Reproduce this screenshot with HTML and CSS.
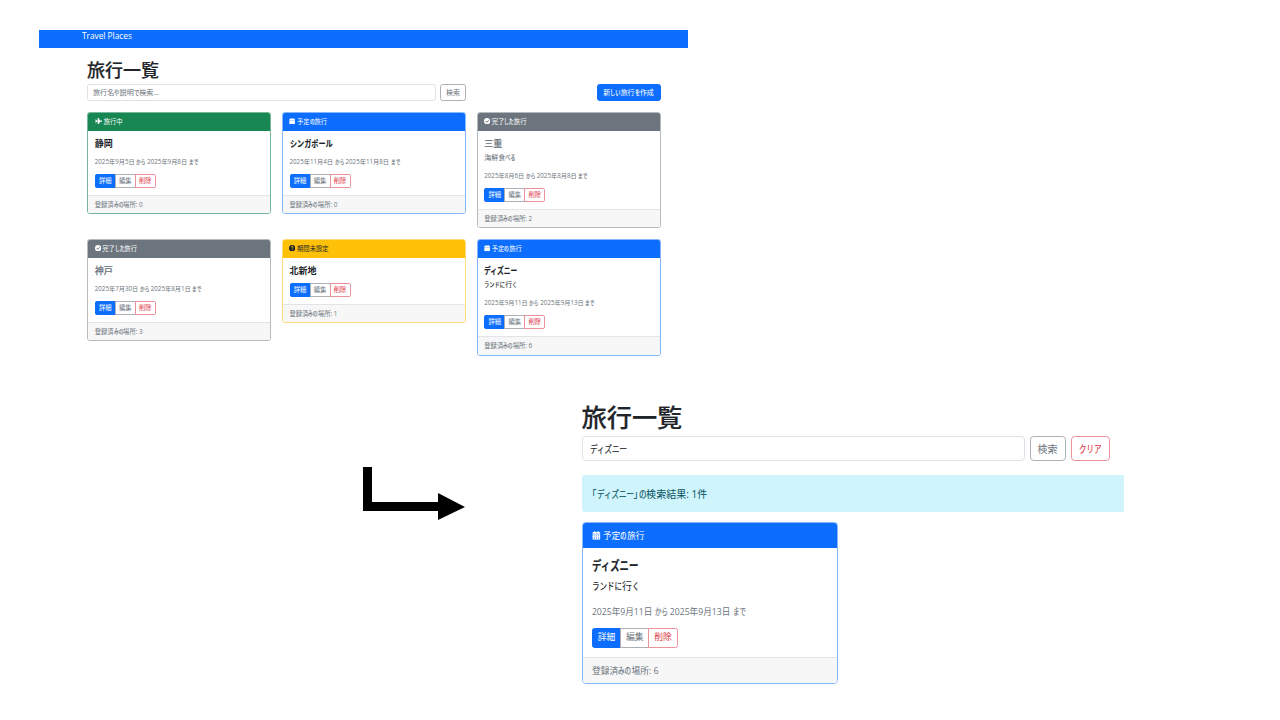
FILE: index.html
```html
<!DOCTYPE html>
<html lang="ja">
<head>
<meta charset="utf-8">
<title>Travel Places</title>
<link rel="stylesheet" href="styles.css">
</head>
<body>
<svg class="defs" aria-hidden="true">
  <symbol id="plane" viewBox="0 0 18 16"><path d="M15.6 6.2c1 0 2.2.9 2.2 1.8s-1.2 1.8-2.2 1.8h-3.5l-3.200 5.600c-.2.4-.5.6-.9.6H6.100c-.4 0-.6-.3-.5-.7L7.100 9.800H3.900L2.500 11.600c-.1.200-.3.300-.5.300H.600c-.300 0-.500-.3-.500-.600L1.100 8 .100 4.700c-.1-.300.1-.600.500-.600H2c.200 0 .4.100.5.300l1.400 1.800h3.200L5.600.700C5.500.3 5.700 0 6.100 0H8c.4 0 .7.200.900.600l3.200 5.600z"/></symbol>
  <symbol id="cal" viewBox="0 0 14 16"><path d="M4.500 0c.6 0 1 .4 1 1v1h3V1c0-.6.4-1 1-1s1 .4 1 1v1h2C13.300 2 14 2.700 14 3.500V5H0V3.500C0 2.700.7 2 1.500 2h2V1c0-.6.4-1 1-1zM0 5.500h14v9c0 .8-.7 1.500-1.500 1.500h-11C.7 16 0 15.300 0 14.500z"/></symbol>
  <symbol id="caldays" viewBox="0 0 14 16"><path fill-rule="evenodd" d="M4 0c.6 0 1 .4 1 1v1h4V1c0-.6.4-1 1-1s1 .4 1 1v1h1.500c.8 0 1.500.7 1.500 1.500V5H0V3.500C0 2.700.7 2 1.500 2H3V1c0-.6.4-1 1-1zM0 6h14v8.500c0 .8-.7 1.500-1.500 1.500h-11C.7 16 0 15.300 0 14.500zM2 8v1.600h2V8zm4 0v1.600h2V8zm4 0v1.600h2V8zM2 12v1.600h2V12zm4 0v1.600h2V12zm4 0v1.600h2V12z"/></symbol>
  <symbol id="check" viewBox="0 0 16 16"><path fill-rule="evenodd" d="M8 0a8 8 0 1 1 0 16A8 8 0 0 1 8 0zM11.500 5 7 9.400 4.700 7.200 3.500 8.500 7 12l5.800-5.700z"/></symbol>
  <symbol id="question" viewBox="0 0 16 16"><path fill-rule="evenodd" d="M8 0a8 8 0 1 1 0 16A8 8 0 0 1 8 0zM4.800 6h1.700c0-.8.6-1.300 1.500-1.300s1.400.4 1.400 1c0 1.300-2.200 1.200-2.200 3.500h1.600c0-1.500 2.300-1.600 2.300-3.600C11.100 4 9.800 3.100 8 3.100 6.100 3.100 4.800 4.200 4.800 6zM7 10.500v2h2v-2z"/></symbol>
</svg>

<section class="screen overview">
  <nav class="navbar">Travel Places</nav>
  <div class="container">
    <h1>旅行一覧</h1>
    <div class="toolbar">
      <div class="field placeholder">旅行名や説明で検索...</div>
      <div class="btn outline-secondary">検索</div>
      <div class="btn primary create">新しい旅行を作成</div>
    </div>
    <div class="cards">
      <article class="card success">
        <header><svg class="wide"><use href="#plane"/></svg>旅行中</header>
        <div class="body"><h5>静岡</h5><p class="date">2025年9月5日 から 2025年9月8日 まで</p>
          <div class="group"><span class="primary">詳細</span><span class="outline-secondary">編集</span><span class="outline-danger">削除</span></div></div>
        <footer>登録済みの場所: 0</footer>
      </article>
      <article class="card blue">
        <header><svg><use href="#cal"/></svg>予定の旅行</header>
        <div class="body"><h5>シンガポール</h5><p class="date">2025年11月4日 から 2025年11月8日 まで</p>
          <div class="group"><span class="primary">詳細</span><span class="outline-secondary">編集</span><span class="outline-danger">削除</span></div></div>
        <footer>登録済みの場所: 0</footer>
      </article>
      <article class="card gray">
        <header><svg><use href="#check"/></svg>完了した旅行</header>
        <div class="body"><h5>三重</h5><p>海鮮食べる</p><p class="date">2025年8月6日 から 2025年8月8日 まで</p>
          <div class="group"><span class="primary">詳細</span><span class="outline-secondary">編集</span><span class="outline-danger">削除</span></div></div>
        <footer>登録済みの場所: 2</footer>
      </article>
      <article class="card gray">
        <header><svg><use href="#check"/></svg>完了した旅行</header>
        <div class="body"><h5>神戸</h5><p class="date">2025年7月30日 から 2025年8月1日 まで</p>
          <div class="group"><span class="primary">詳細</span><span class="outline-secondary">編集</span><span class="outline-danger">削除</span></div></div>
        <footer>登録済みの場所: 3</footer>
      </article>
      <article class="card warning">
        <header><svg><use href="#question"/></svg>期間未設定</header>
        <div class="body"><h5>北新地</h5>
          <div class="group"><span class="primary">詳細</span><span class="outline-secondary">編集</span><span class="outline-danger">削除</span></div></div>
        <footer>登録済みの場所: 1</footer>
      </article>
      <article class="card blue">
        <header><svg><use href="#cal"/></svg>予定の旅行</header>
        <div class="body"><h5>ディズニー</h5><p>ランドに行く</p><p class="date">2025年9月11日 から 2025年9月13日 まで</p>
          <div class="group"><span class="primary">詳細</span><span class="outline-secondary">編集</span><span class="outline-danger">削除</span></div></div>
        <footer>登録済みの場所: 6</footer>
      </article>
    </div>
  </div>
</section>

<div class="result-row">
  <svg class="arrow" viewBox="0 0 102 54"><path d="M0 0H9V35H75V26L102 40 75 53V44H0z"/></svg>
  <section class="screen result">
    <h1>旅行一覧</h1>
    <div class="toolbar">
      <div class="field">ディズニー</div>
      <div class="btn outline-secondary">検索</div>
      <div class="btn outline-danger">クリア</div>
    </div>
    <div class="alert">「ディズニー」の検索結果: 1件</div>
    <article class="card blue">
      <header><svg><use href="#caldays"/></svg>予定の旅行</header>
      <div class="body"><h5>ディズニー</h5><p>ランドに行く</p><p class="date">2025年9月11日 から 2025年9月13日 まで</p>
        <div class="group"><span class="primary">詳細</span><span class="outline-secondary">編集</span><span class="outline-danger">削除</span></div></div>
      <footer>登録済みの場所: 6</footer>
    </article>
  </section>
</div>
<script src="kana.js"></script>
</body>
</html>
```

FILE: styles.css
```css
* { box-sizing: border-box; }
body {
  margin: 0;
  width: 1280px;
  height: 720px;
  overflow: hidden;
  background: #fff;
  color: #212529;
  font-family: "Open Sans", "Noto Sans CJK JP", sans-serif;
  padding-top: 30px;
}
.defs { position: absolute; width: 0; height: 0; }

/* --u is one CSS pixel of the application at this screen's zoom */
.screen {
  font-size: calc(var(--u) * 16);
  line-height: 1.5;
  white-space: nowrap;
}
.overview { --u: .45px; width: 649px; height: 371.500px; margin-left: 39px; }
.result { --u: .627px; width: 542.500px; }

.navbar {
  height: 18px;
  padding-left: 43px;
  background: #0d6efd;
  color: #fff;
  font-size: 8.300px;
  line-height: 11px;
}
.container { padding: 10.800px 27.500px 0 48px; }
h1 {
  margin: 0;
  font-size: calc(var(--u) * 40);
  font-weight: 500;
  line-height: 1.2;
  -webkit-text-stroke: .2px currentColor;
}
.overview h1 { height: 25px; line-height: 22px; }
.result h1 { height: 34.500px; font-size: 25.200px; line-height: 27px; }

.toolbar { display: flex; gap: 4px; height: calc(var(--u) * 38); }
.field, .btn {
  display: flex;
  align-items: center;
  border: 1px solid #dee2e6;
  border-radius: calc(var(--u) * 6);
  padding: 0 calc(var(--u) * 12);
}
.overview .field { width: 349px; font-size: 7.100px; padding: 0 5px; }
.overview .btn { font-size: 7px; justify-content: center; width: 26px; padding: 1px 0 0; }
.overview .create { width: 64px; margin-left: auto; }
.result .toolbar { gap: 5px; height: 24.500px; }
.result .field { width: 443px; }
.result .btn { justify-content: center; width: 36px; padding: 0; }
.result .btn.outline-danger { width: 39px; }
.placeholder { color: #6c757d; }

.primary { background: #0d6efd; border-color: #0d6efd; color: #fff; }
.outline-secondary { color: #6c757d; border-color: #abb1b6; }
.outline-danger { color: #dc3545; border-color: #eb929b; }

.cards {
  display: grid;
  grid-template-columns: repeat(3, 1fr);
  gap: 10.500px 10.800px;
  align-items: start;
  margin-top: 11px;
}
.card {
  border: 1px solid var(--line);
  border-radius: calc(var(--u) * 6);
  overflow: hidden;
}
.success { --head: #198754; --line: #75b798; }
.blue { --head: #0d6efd; --line: #86b6fe; }
.gray { --head: #6c757d; --line: #b5babe; }
.warning { --head: #ffc107; --line: #ffdc78; }
.card header {
  display: flex;
  align-items: center;
  gap: calc(var(--u) * 3);
  height: calc(var(--u) * 42);
  margin: -1px -1px 0;
  padding: 0 calc(var(--u) * 17);
  background: var(--head);
  color: #fff;
  font-size: calc(var(--u) * 14);
}
.result .card header { padding-top: 1px; }
.card.warning header { color: #212529; }
.card header svg { width: calc(var(--u) * 14); height: calc(var(--u) * 14); fill: currentColor; }
.card header svg.wide { width: calc(var(--u) * 17); }
.card .body { padding: calc(var(--u) * 16) calc(var(--u) * 15) calc(var(--u) * 15); }
.gray .body { color: #6c757d; }
h5 { margin: 0 0 calc(var(--u) * 8); font-size: calc(var(--u) * 20); line-height: 1.2; font-weight: 700; }
.gray h5 { font-weight: 500; -webkit-text-stroke: .2px currentColor; }
.result h5 { line-height: 1.12; height: calc(var(--u) * 24); }
p { margin: 0 0 calc(var(--u) * 16); height: calc(var(--u) * 24); line-height: calc(var(--u) * 25); }
.overview p { font-size: 7px; line-height: 10.200px; }
.screen .date { font-size: calc(var(--u) * 13.800); color: #6c757d; }
.result .date .label { padding-top: calc(var(--u) * 1); }
h5 + .date, h5 + .group { margin-top: calc(var(--u) * 16); }
.group { display: flex; height: calc(var(--u) * 31); font-size: calc(var(--u) * 14); line-height: calc(var(--u) * 26.500); }
.result .group { line-height: calc(var(--u) * 25); }
.group > span {
  width: calc(var(--u) * 46.700);
  border-width: 1px;
  border-style: solid;
  text-align: center;
}
.group > span + span { margin-left: -1px; }
.group > :first-child { border-radius: calc(var(--u) * 4) 0 0 calc(var(--u) * 4); }
.group > :last-child { border-radius: 0 calc(var(--u) * 4) calc(var(--u) * 4) 0; }
.card footer {
  display: flex;
  align-items: center;
  height: calc(var(--u) * 41);
  padding: 0 calc(var(--u) * 15);
  border-top: 1px solid #e3e4e5;
  background: #f7f7f7;
  color: #6c757d;
  font-size: calc(var(--u) * 14);
}
.result .card footer { padding-top: 1px; }

.result-row { display: flex; padding-left: 363px; }
.arrow { width: 102px; height: 54px; margin: 65.500px 116.500px 0 0; }
.alert {
  display: flex;
  align-items: center;
  height: 36.500px;
  margin: 14.500px 0 10px;
  padding: 0 10px;
  background: #cff4fc;
  border-radius: 3px 0 0 3px;
  color: #055160;
}
.result .card { width: 256.500px; }

/* condensed kana, as in a UI typeface */
.label { display: inline-block; white-space: pre; }
.overview h5 .label, .overview p .label { transform: translateY(1px); }
.result .label { transform: translateY(.09em); }
.kana { display: inline-block; transform-origin: 0 50%; -webkit-text-stroke: .15px currentColor; }
.bracket { font-feature-settings: "palt"; }
```

FILE: kana.js
```javascript
const RATIO = 0.75;
const walker = document.createTreeWalker(document.body, NodeFilter.SHOW_TEXT);
const nodes = [];
while (walker.nextNode()) {
  const n = walker.currentNode;
  if (n.parentNode.closest("script") || !n.data.trim()) continue;
  nodes.push(n);
}
for (const n of nodes) {
  const label = document.createElement("span");
  label.className = "label";
  for (const part of n.data.split(/([\u3040-\u30ff]+|[「」])/)) {
    if (!part) continue;
    const s = document.createElement("span");
    s.textContent = part;
    if (/[\u3040-\u30ff]/.test(part)) s.className = "kana";
    else if (/[「」]/.test(part)) s.className = "bracket";
    label.append(s);
  }
  n.replaceWith(label);
}
for (const s of document.querySelectorAll(".kana")) {
  const w = s.getBoundingClientRect().width;
  const ratio = s.textContent === "シンガポール" ? 0.79 : RATIO;
  s.style.transform = `scaleX(${ratio})`;
  s.style.marginRight = `${-w * (1 - ratio)}px`;
}
```
